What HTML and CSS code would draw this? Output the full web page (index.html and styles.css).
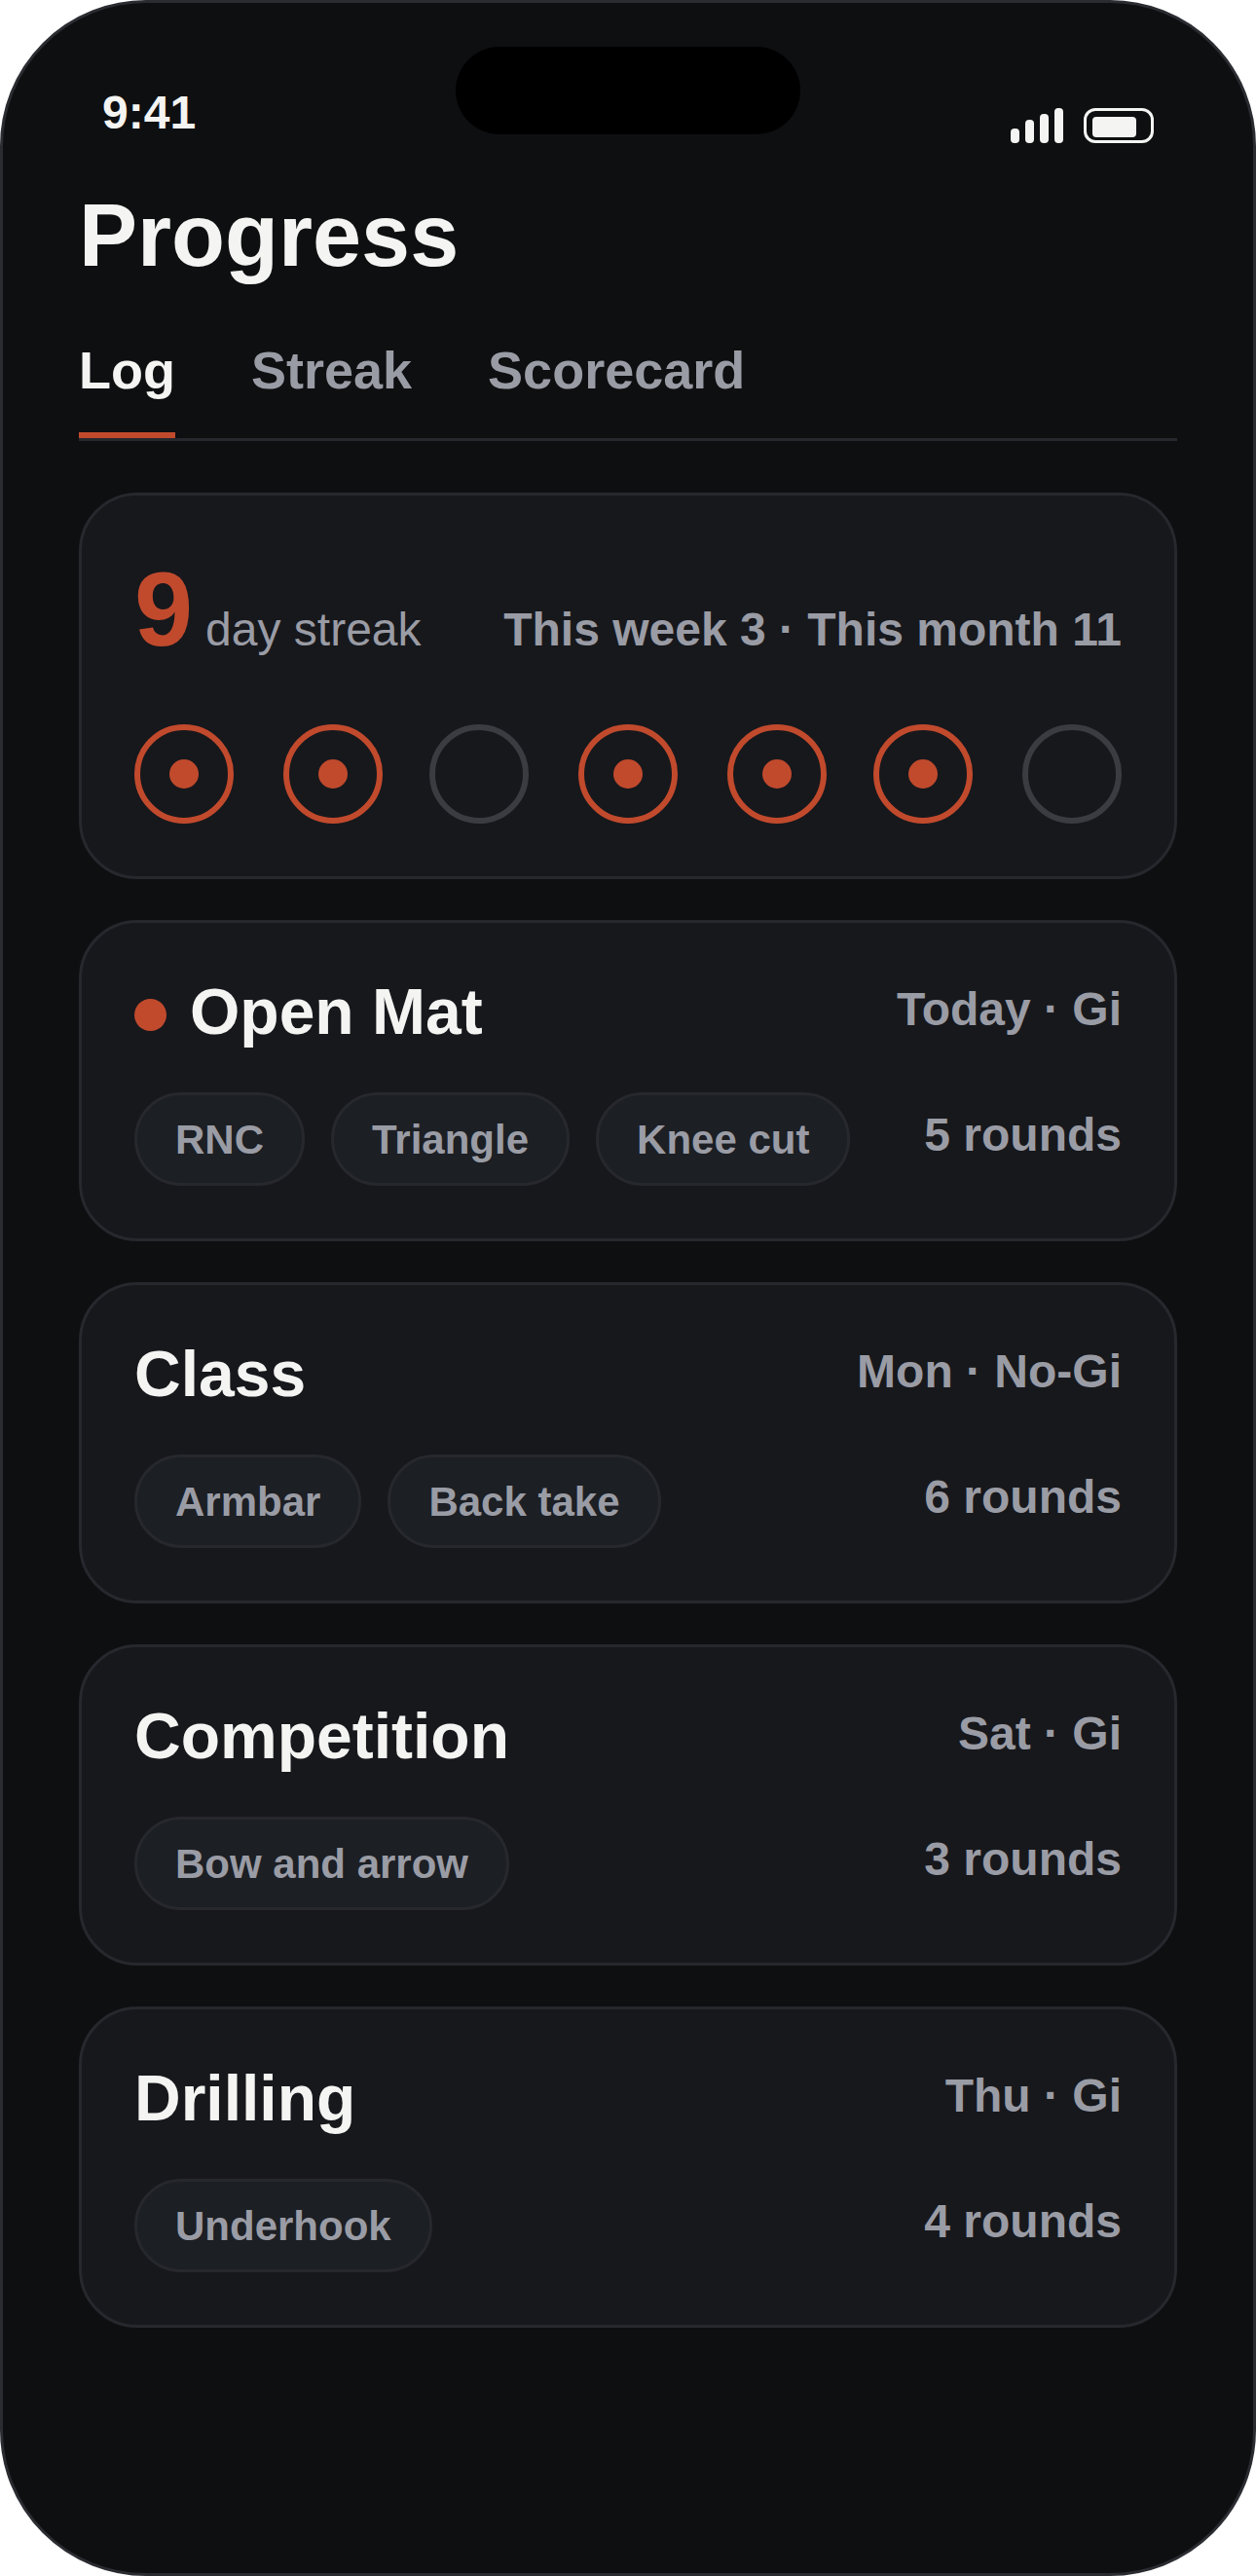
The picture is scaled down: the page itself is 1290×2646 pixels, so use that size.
FILE: index.html
```html
<!DOCTYPE html>
<html lang="en">
<head>
  <meta charset="UTF-8" />
  <meta name="viewport" content="width=device-width, initial-scale=1.0"/>
  <title>Progress</title>
  <link rel="stylesheet" href="styles.css">
</head>
<body>

<div class="phone">
  <div class="notch"></div>

  <div class="status">
    <span class="time">9:41</span>
    <div class="status-icons">
      <div class="signal">
        <span class="bar bar-1"></span>
        <span class="bar bar-2"></span>
        <span class="bar bar-3"></span>
        <span class="bar bar-4"></span>
      </div>
      <div class="battery"><span class="battery-fill"></span></div>
    </div>
  </div>

  <h1>Progress</h1>

  <nav class="tabs">
    <span class="tab active">Log</span>
    <span class="tab">Streak</span>
    <span class="tab">Scorecard</span>
  </nav>

  <div class="card streak-card">
    <div class="streak-top">
      <span class="streak-num">9</span>
      <span class="streak-label">day streak</span>
      <span class="streak-stats">This week 3 · This month 11</span>
    </div>
    <div class="days">
      <span class="day done"></span>
      <span class="day done"></span>
      <span class="day"></span>
      <span class="day done"></span>
      <span class="day done"></span>
      <span class="day done"></span>
      <span class="day"></span>
    </div>
  </div>

  <div class="card session">
    <div class="session-top">
      <div class="session-name"><span class="live-dot"></span>Open Mat</div>
      <span class="session-meta">Today · Gi</span>
    </div>
    <div class="session-bottom">
      <div class="chips">
        <span class="chip">RNC</span>
        <span class="chip">Triangle</span>
        <span class="chip">Knee cut</span>
      </div>
      <span class="rounds">5 rounds</span>
    </div>
  </div>

  <div class="card session">
    <div class="session-top">
      <div class="session-name">Class</div>
      <span class="session-meta">Mon · No-Gi</span>
    </div>
    <div class="session-bottom">
      <div class="chips">
        <span class="chip">Armbar</span>
        <span class="chip">Back take</span>
      </div>
      <span class="rounds">6 rounds</span>
    </div>
  </div>

  <div class="card session">
    <div class="session-top">
      <div class="session-name">Competition</div>
      <span class="session-meta">Sat · Gi</span>
    </div>
    <div class="session-bottom">
      <div class="chips">
        <span class="chip">Bow and arrow</span>
      </div>
      <span class="rounds">3 rounds</span>
    </div>
  </div>

  <div class="card session">
    <div class="session-top">
      <div class="session-name">Drilling</div>
      <span class="session-meta">Thu · Gi</span>
    </div>
    <div class="session-bottom">
      <div class="chips">
        <span class="chip">Underhook</span>
      </div>
      <span class="rounds">4 rounds</span>
    </div>
  </div>
</div>

</body>
</html>
```

FILE: styles.css
```css
* {
  box-sizing: border-box;
}

body {
  margin: 0;
  background: #fff;
  font-family: "Liberation Sans", Arial, sans-serif;
  color: #f4f4f2;
}

.phone {
  position: relative;
  width: 1290px;
  height: 2646px;
  padding: 85px 78px 0;
  background: #0e0f11;
  border: 3px solid #2a2c31;
  border-radius: 150px;
  overflow: hidden;
}

.notch {
  position: absolute;
  top: 45px;
  left: 465px;
  width: 354px;
  height: 90px;
  background: #000;
  border-radius: 45px;
}

.status {
  display: flex;
  justify-content: space-between;
  padding: 0 24px;
}

.time {
  font-size: 48px;
  font-weight: bold;
}

.status-icons {
  display: flex;
  align-items: flex-end;
  gap: 21px;
  margin-top: 23px;
}

.signal {
  display: flex;
  align-items: flex-end;
  gap: 6px;
}

.bar {
  width: 9px;
  background: #f4f4f2;
  border-radius: 4px;
}

.bar-1 { height: 15px; }
.bar-2 { height: 24px; }
.bar-3 { height: 30px; }
.bar-4 { height: 36px; }

.battery {
  width: 72px;
  height: 36px;
  padding: 6px 6px 3px;
  border: 3px solid #f4f4f2;
  border-radius: 12px;
}

.battery-fill {
  display: block;
  width: 45px;
  height: 100%;
  background: #f4f4f2;
  border-radius: 4px;
}

h1 {
  margin: 44px 0 55px;
  font-size: 90px;
  font-weight: bold;
}

.tabs {
  display: flex;
  gap: 78px;
  margin-bottom: 53px;
  border-bottom: 3px solid #26282d;
}

.tab {
  padding-bottom: 33px;
  border-bottom: 6px solid transparent;
  font-size: 54px;
  font-weight: bold;
  color: #9a9ca5;
}

.tab.active {
  color: #f4f4f2;
  border-bottom-color: #c14a2d;
}

.card {
  padding: 54px;
  margin-bottom: 42px;
  background: #17181c;
  border: 3px solid #26282d;
  border-radius: 60px;
}

.streak-top {
  display: flex;
  align-items: baseline;
}

.streak-num {
  font-size: 108px;
  font-weight: bold;
  color: #c14a2d;
}

.streak-label {
  margin-left: 13px;
  font-size: 48px;
  color: #9a9ca5;
}

.streak-stats {
  margin-left: auto;
  font-size: 48px;
  font-weight: bold;
  color: #9a9ca5;
}

.days {
  display: grid;
  grid-template-columns: 153px 150px 153px 153px 150px 153px 102px;
  margin-top: 56px;
}

.day {
  display: flex;
  align-items: center;
  justify-content: center;
  width: 102px;
  height: 102px;
  border: 6px solid #3a3c41;
  border-radius: 50%;
}

.day.done {
  border-color: #c14a2d;
}

.day.done::after {
  content: "";
  width: 30px;
  height: 30px;
  background: #c14a2d;
  border-radius: 50%;
}

.session-top,
.session-bottom {
  display: flex;
  justify-content: space-between;
  align-items: flex-start;
}

.session-bottom {
  margin-top: 46px;
}

.session-name {
  display: flex;
  align-items: center;
  gap: 24px;
  font-size: 66px;
  font-weight: bold;
  line-height: 74px;
}

.live-dot {
  width: 33px;
  height: 33px;
  margin-top: 7px;
  background: #c14a2d;
  border-radius: 50%;
}

.session-meta {
  margin-top: 7px;
  font-size: 48px;
  font-weight: bold;
  color: #9a9ca5;
}

.chips {
  display: flex;
  gap: 27px;
}

.chip {
  padding: 22px 39px 20px;
  background: #1c1f24;
  border: 3px solid #26282d;
  border-radius: 48px;
  font-size: 42px;
  font-weight: bold;
  color: #9a9ca5;
}

.rounds {
  margin-top: 16px;
  font-size: 48px;
  font-weight: bold;
  color: #9a9ca5;
}
```
